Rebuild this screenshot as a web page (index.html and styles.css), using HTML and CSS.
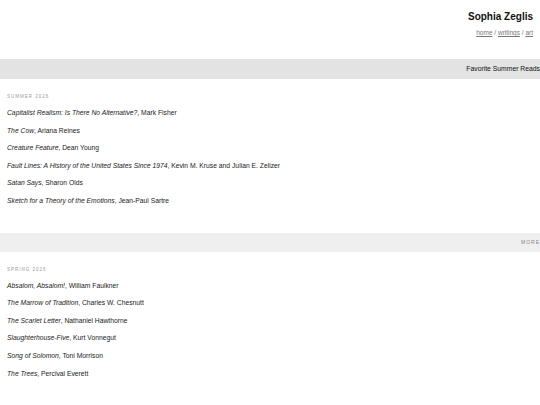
FILE: index.html
```html
<!DOCTYPE html>
<html>
<head>
<meta charset="utf-8">
<link rel="stylesheet" href="styles.css">
</head>
<body>
<header class="site-header">
  <div class="site-title">Sophia Zeglis</div>
  <nav class="site-nav"><a href="#">home</a> / <a href="#">writings</a> / <a href="#">art</a></nav>
</header>
<div class="bar bar-title">Favorite Summer Reads</div>
<section class="season">
  <div class="season-label">Summer 2026</div>
  <ul class="reads">
    <li><i>Capitalist Realism: Is There No Alternative?</i>, Mark Fisher</li>
    <li><i>The Cow</i>, Ariana Reines</li>
    <li><i>Creature Feature</i>, Dean Young</li>
    <li><i>Fault Lines: A History of the United States Since 1974</i>, Kevin M. Kruse and Julian E. Zelizer</li>
    <li><i>Satan Says</i>, Sharon Olds</li>
    <li><i>Sketch for a Theory of the Emotions</i>, Jean-Paul Sartre</li>
  </ul>
</section>
<div class="bar bar-more">MORE</div>
<section class="season">
  <div class="season-label">Spring 2026</div>
  <ul class="reads">
    <li><i>Absalom, Absalom!</i>, William Faulkner</li>
    <li><i>The Marrow of Tradition</i>, Charles W. Chesnutt</li>
    <li><i>The Scarlet Letter</i>, Nathaniel Hawthorne</li>
    <li><i>Slaughterhouse-Five</i>, Kurt Vonnegut</li>
    <li><i>Song of Solomon</i>, Toni Morrison</li>
    <li><i>The Trees</i>, Percival Everett</li>
  </ul>
</section>
</body>
</html>
```
FILE: styles.css
```css
html, body {
  margin: 0;
  padding: 0;
  background: #fff;
}
body {
  font-family: "Liberation Sans", Arial, sans-serif;
  color: #1a1a1a;
}
.site-header {
  text-align: right;
  padding: 10px 7px 21px 0;
}
.site-title {
  font-size: 10px;
  font-weight: bold;
  line-height: 14px;
  color: #111;
}
.site-nav {
  margin-top: 4px;
  font-size: 6.5px;
  line-height: 10px;
  color: #777;
}
.site-nav a {
  color: #777;
  text-decoration: underline;
}
.bar {
  text-align: right;
}
.bar-title {
  background: #e3e3e3;
  height: 20px;
  line-height: 20px;
  font-size: 6.8px;
  color: #111;
}
.bar-more {
  background: #efefef;
  height: 19px;
  line-height: 19px;
  font-size: 5px;
  letter-spacing: 1px;
  color: #888;
}
.season {
  padding: 13px 7px 23px;
}
.season-label {
  font-size: 4.5px;
  line-height: 10px;
  letter-spacing: 1px;
  text-transform: uppercase;
  color: #999;
  margin-bottom: 2px;
}
.reads {
  list-style: none;
  margin: 0;
  padding: 0;
}
.reads li {
  font-size: 6.75px;
  line-height: 17.6px;
}
```
